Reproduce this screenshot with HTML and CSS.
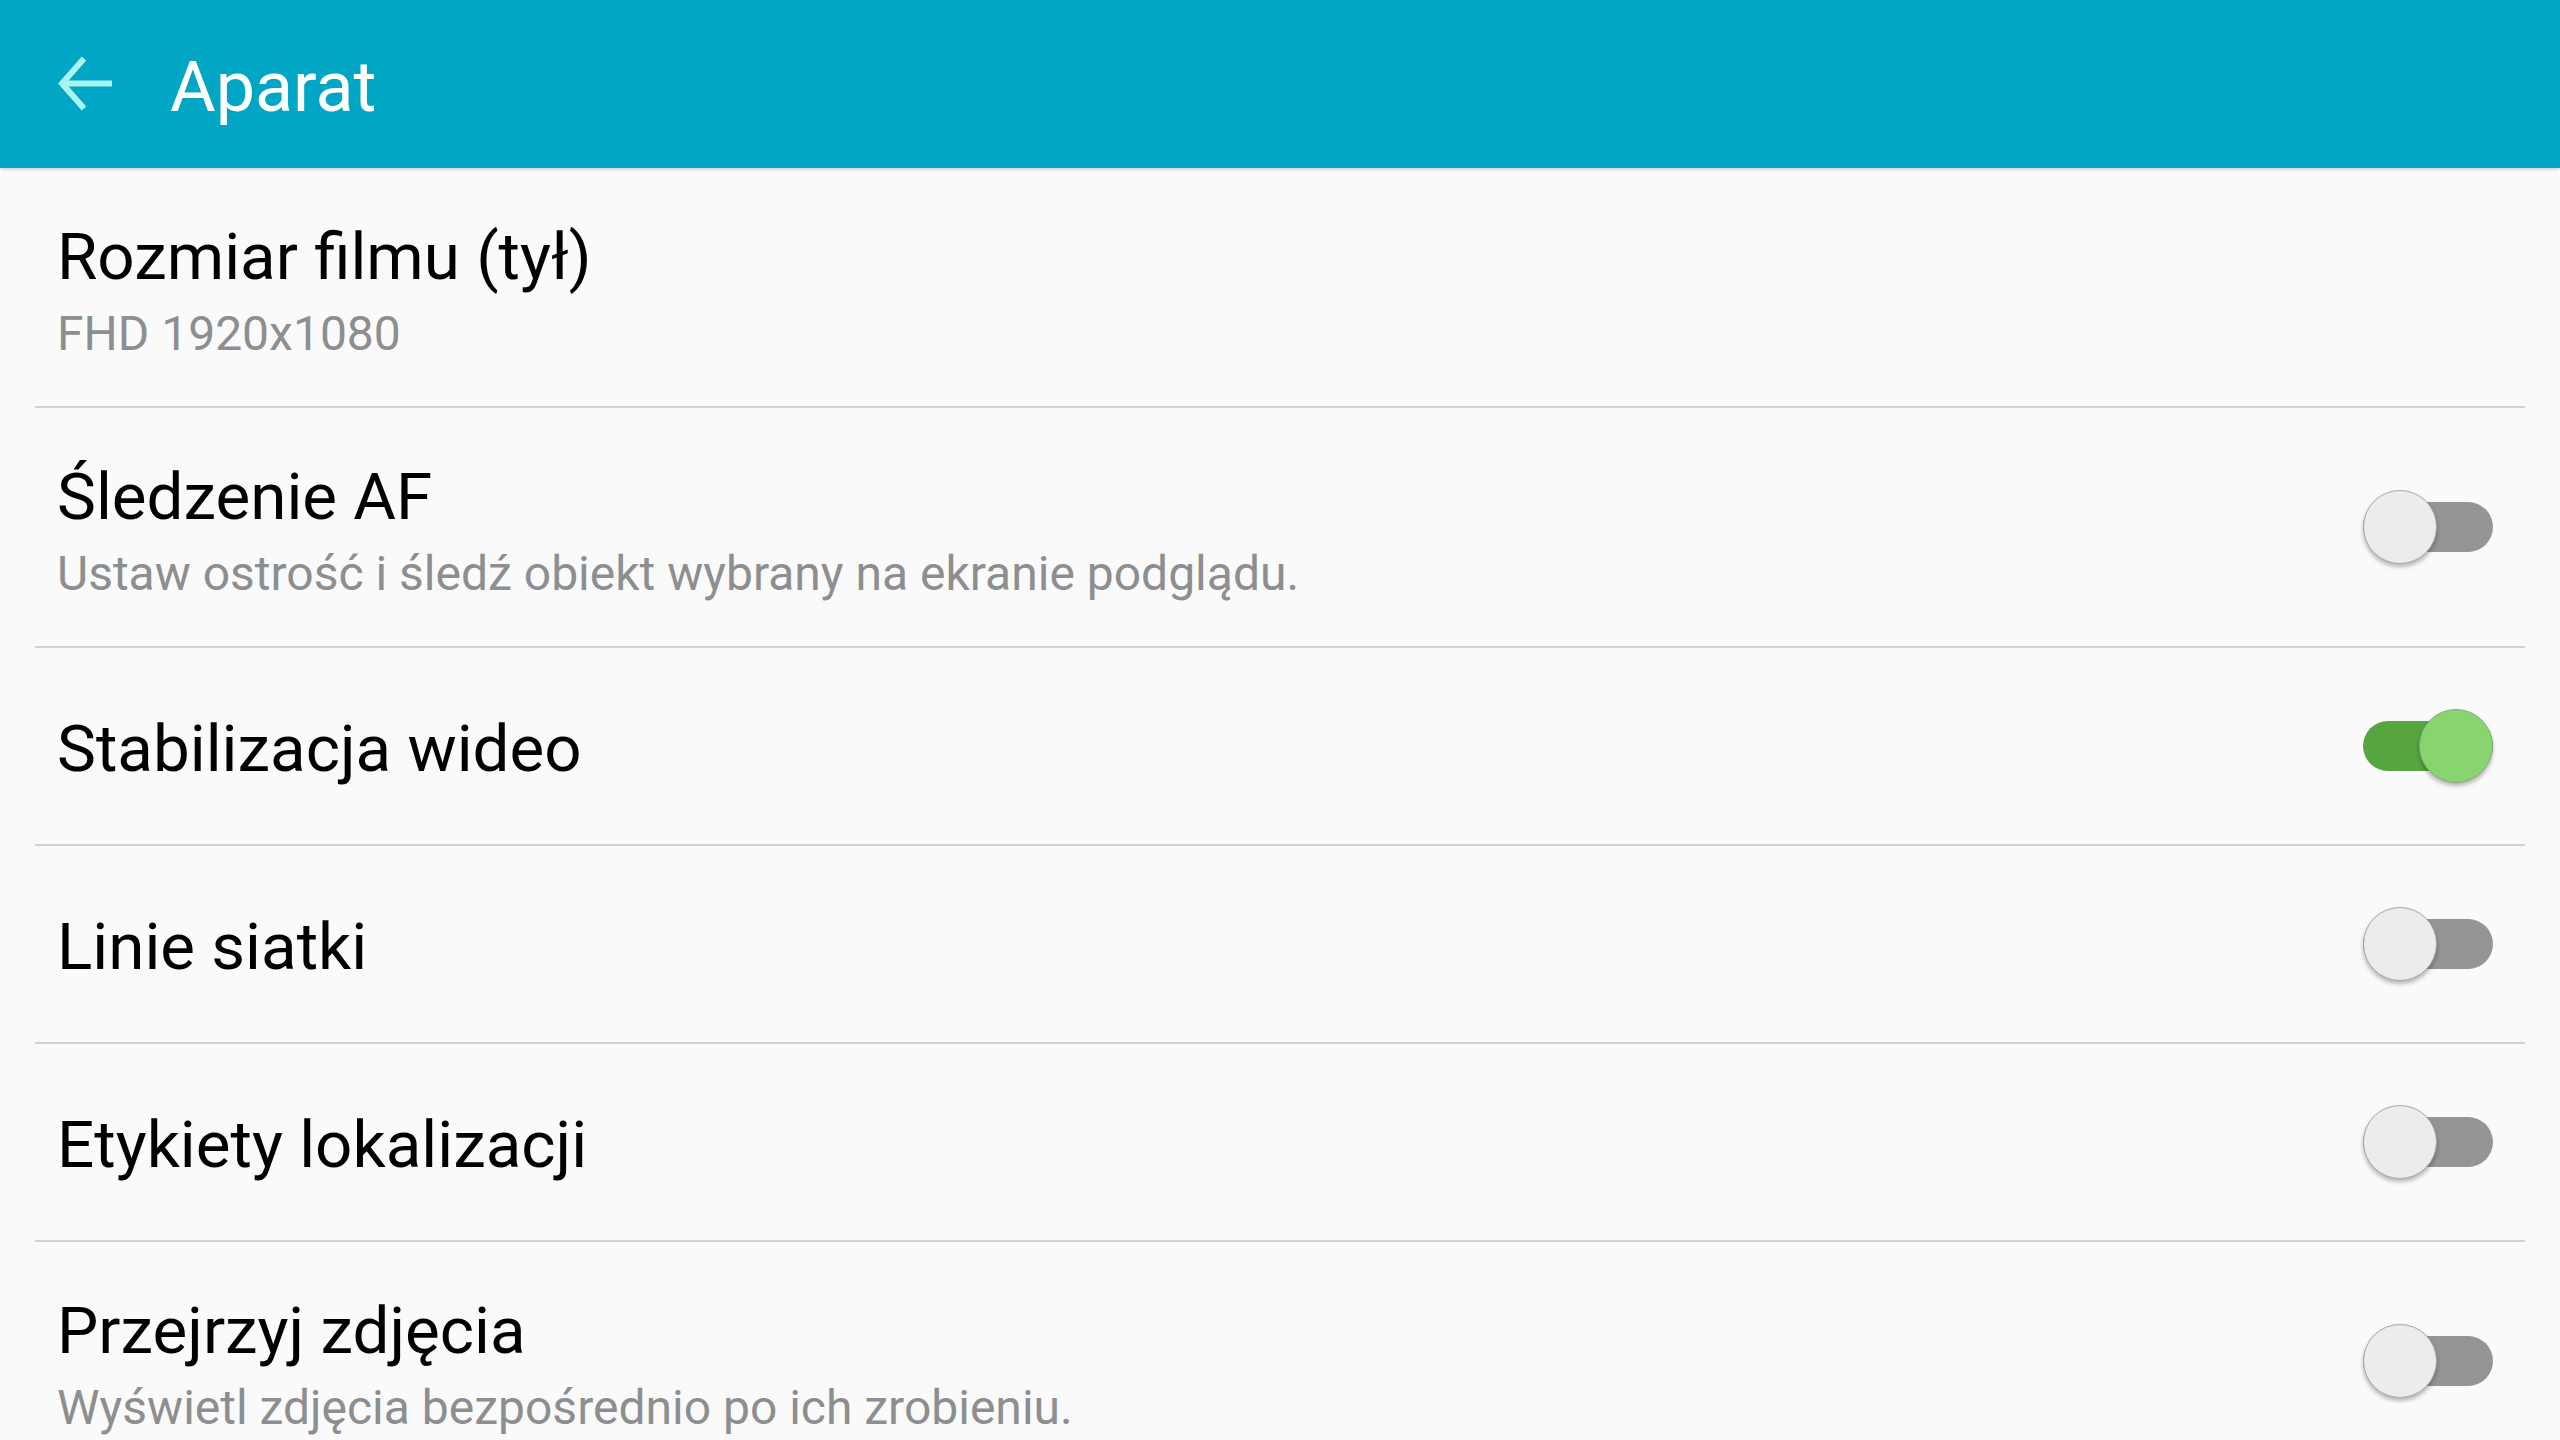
FILE: index.html
```html
<!DOCTYPE html>
<html lang="pl">
<head>
<meta charset="utf-8">
<title>Aparat</title>
<link rel="stylesheet" href="styles.css">
</head>
<body>
<header class="appbar">
  <svg class="back" width="56" height="56" viewBox="0 0 56 56" aria-hidden="true">
    <path d="M55 27.5 H5" fill="none" stroke="#a9f6f0" stroke-width="6"/>
    <path d="M27 2.5 L5 27.5 L27 52.5" fill="none" stroke="#a9f6f0" stroke-width="6" stroke-linejoin="miter"/>
  </svg>
  <h1 class="appbar-title">Aparat</h1>
</header>
<main class="list">
  <div class="row row-two">
    <div class="text">
      <div class="title">Rozmiar filmu (tył)</div>
      <div class="sub">FHD 1920x1080</div>
    </div>
  </div>
  <div class="row row-two">
    <div class="text">
      <div class="title">Śledzenie AF</div>
      <div class="sub">Ustaw ostrość i śledź obiekt wybrany na ekranie podglądu.</div>
    </div>
    <div class="switch"><div class="thumb"></div></div>
  </div>
  <div class="row row-one">
    <div class="text">
      <div class="title">Stabilizacja wideo</div>
    </div>
    <div class="switch on"><div class="thumb"></div></div>
  </div>
  <div class="row row-one">
    <div class="text">
      <div class="title">Linie siatki</div>
    </div>
    <div class="switch"><div class="thumb"></div></div>
  </div>
  <div class="row row-one">
    <div class="text">
      <div class="title">Etykiety lokalizacji</div>
    </div>
    <div class="switch"><div class="thumb"></div></div>
  </div>
  <div class="row row-two">
    <div class="text">
      <div class="title">Przejrzyj zdjęcia</div>
      <div class="sub">Wyświetl zdjęcia bezpośrednio po ich zrobieniu.</div>
    </div>
    <div class="switch"><div class="thumb"></div></div>
  </div>
</main>
</body>
</html>
```
FILE: styles.css
```css
html, body {
  margin: 0;
  padding: 0;
}
body {
  background: #fafafa;
  font-family: Roboto, "Noto Sans", "Liberation Sans", sans-serif;
  width: 2560px;
  height: 1440px;
  overflow: hidden;
}
.appbar {
  position: relative;
  z-index: 1;
  height: 168px;
  background: #00a6c4;
  display: flex;
  align-items: center;
  padding-left: 57px;
  box-shadow: 0 1px 3px rgba(0, 0, 0, 0.22);
}
.back {
  display: block;
  flex-shrink: 0;
}
.appbar-title {
  margin: 6px 0 0 57px;
  font-size: 70px;
  line-height: 70px;
  font-weight: 400;
  color: #ffffff;
}
.list {
  margin: 0 35px;
}
.row {
  display: flex;
  align-items: center;
  padding: 0 32px 0 22px;
}
.row + .row {
  border-top: 2px solid #d1d1d1;
}
.text {
  flex: 1;
  min-width: 0;
}
.row-one .text {
  padding: 62px 0 56px;
}
.row-two .text {
  padding: 50px 0 34px;
}
.title {
  font-size: 65.5px;
  line-height: 78px;
  color: #000000;
  white-space: nowrap;
}
.sub {
  font-size: 48px;
  line-height: 76px;
  color: #8c8e90;
  white-space: nowrap;
}
.switch {
  width: 130px;
  height: 50px;
  border-radius: 25px;
  background: #959595;
  display: flex;
  align-items: center;
  justify-content: flex-start;
  flex-shrink: 0;
}
.switch.on {
  background: #56a640;
  justify-content: flex-end;
}
.thumb {
  width: 72px;
  height: 72px;
  flex-shrink: 0;
  border-radius: 50%;
  background: #ececec;
  border: 1px solid #a8a8a8;
  box-shadow: 0 3px 4px rgba(0, 0, 0, 0.28);
}
.switch.on .thumb {
  background: #88d46e;
  border-color: #8aa882;
}
```
